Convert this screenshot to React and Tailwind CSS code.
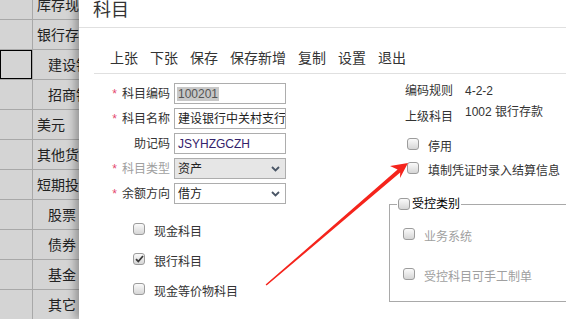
/* 科目 dialog over the account tree — 566 × 319 */

const font = "font-['Liberation_Sans','Noto_Sans_CJK_SC',sans-serif]";

/* ── Left tree (behind the dialog) ── */
const treeRows = [
  { t: "库存现金" },
  { t: "银行存款" },
  { t: "建设银行", sub: true, sel: true },
  { t: "招商银行", sub: true },
  { t: "美元" },
  { t: "其他货币资金" },
  { t: "短期投资" },
  { t: "股票", sub: true },
  { t: "债券", sub: true },
  { t: "基金", sub: true },
  { t: "其它", sub: true },
];

const Tree = () => (
  <div className="w-[79px] shrink-0 overflow-hidden bg-[#d4d4d4]">
    <div className="-mt-[10px]">
      {treeRows.map((r, i) => (
        <div key={i} className="flex h-[30px] border-b border-[#a8a8a8]">
          <div
            className={`w-[33px] shrink-0 border-r border-[#a8a8a8] ${
              r.sel ? "shadow-[inset_0_0_0_1px_#000]" : ""
            }`}
          />
          <div
            className={`flex items-center whitespace-nowrap text-[14px] leading-[20px] text-[#222] ${
              r.sub ? "pl-[15px]" : "pl-[4px]"
            }`}
          >
            {r.t}
          </div>
        </div>
      ))}
    </div>
  </div>
);

/* ── Checkbox (old-style gray) ── */
const Check = ({ checked }) => (
  <span className="w-[12px] h-[12px] shrink-0 rounded-[3px] border border-[#9c9c9c] bg-linear-to-b from-[#fafafa] to-[#d6d6d6] flex items-center justify-center">
    {checked && (
      <svg width="9" height="8" viewBox="0 0 9 8" aria-hidden="true">
        <path d="M1 4.2l2.3 2.3L8 1" fill="none" stroke="#3a3a3a" strokeWidth="1.8" />
      </svg>
    )}
  </span>
);

const CheckItem = ({ label, checked, gray, className = "" }) => (
  <div className={`flex items-start ${className}`}>
    <Check checked={checked} />
    <span className={`ml-[9px] mt-[1px] text-[12px] leading-[16px] whitespace-nowrap ${gray ? "text-[#a0a0a0]" : "text-[#333]"}`}>
      {label}
    </span>
  </div>
);

const Chevron = () => (
  <svg width="9" height="6" viewBox="0 0 9 6" aria-hidden="true">
    <path d="M1 1l3.5 3.5L8 1" fill="none" stroke="#4a5666" strokeWidth="1.8" />
  </svg>
);

/* ── Form row ── */
const FormRow = ({ label, req, disabled, children }) => (
  <div className="flex items-center h-[21px]">
    <div className="w-[80px] pr-[4px] text-right text-[12px] leading-[16px] whitespace-nowrap">
      {req && <span className="text-[#e4476e] mr-[5px]">*</span>}
      <span className={disabled ? "text-[#a0a0a0]" : "text-[#333]"}>{label}</span>
    </div>
    {children}
  </div>
);

const Field = ({ children, className = "" }) => (
  <div className={`w-[112px] h-[21px] border border-[#adadad] flex items-center overflow-hidden whitespace-nowrap text-[12px] leading-[16px] ${className}`}>
    {children}
  </div>
);

const Select = ({ value, disabled }) => (
  <Field className={`justify-between pl-[3px] pr-[5px] text-[#222] ${disabled ? "bg-[#e6e6e6]" : "bg-white"}`}>
    <span>{value}</span>
    <Chevron />
  </Field>
);

/* ── Red pointer arrow (annotation over the page) ── */
const Arrow = () => (
  <svg className="absolute inset-0 pointer-events-none" width="566" height="319" aria-hidden="true">
    <polygon
      points="408,163 390,166 397.6,169.6 265.6,284.6 266.6,285.6 400.2,172.6 400,178"
      fill="#f5241c"
    />
  </svg>
);

export default function App() {
  return (
    <div className={`relative w-[566px] h-[319px] overflow-hidden flex ${font}`}>
      <Tree />

      <div className="relative z-10 flex-1 bg-white overflow-hidden shadow-[-4px_0_8px_rgba(0,0,0,0.3)]">
        {/* Title */}
        <div className="h-[28px] border-b border-[#e0e0e0] pl-[14px] text-[18px] leading-[20px] text-[#333]">
          科目
        </div>

        {/* Toolbar */}
        <div className="ml-[15px] h-[46px] pt-[21px] pl-[16px] border-b border-[#e0e0e0] flex gap-[12px] text-[14px] leading-[18px] text-[#333]">
          {["上张", "下张", "保存", "保存新增", "复制", "设置", "退出"].map((t) => (
            <span key={t}>{t}</span>
          ))}
        </div>

        {/* Body */}
        <div className="ml-[15px] flex">
          {/* Left form */}
          <div className="w-[295px] shrink-0 pt-[9px]">
            <div className="flex flex-col gap-[4px]">
              <FormRow label="科目编码" req>
                <Field className="pl-[2px]">
                  <span className="inline-block px-[1px] bg-[#c8c8c8] text-[#555] leading-[14px]">100201</span>
                </Field>
              </FormRow>
              <FormRow label="科目名称" req>
                <Field className="pl-[3px] text-[#222]">建设银行中关村支行</Field>
              </FormRow>
              <FormRow label="助记码">
                <Field className="pl-[3px] text-[#33226b]">JSYHZGCZH</Field>
              </FormRow>
              <FormRow label="科目类型" req disabled>
                <Select value="资产" disabled />
              </FormRow>
              <FormRow label="余额方向" req>
                <Select value="借方" />
              </FormRow>
            </div>

            <div className="mt-[19px] pl-[39px]">
              <CheckItem label="现金科目" className="h-[30px]" />
              <CheckItem label="银行科目" checked className="h-[30px]" />
              <CheckItem label="现金等价物科目" className="h-[30px]" />
            </div>
          </div>

          {/* Right column */}
          <div className="w-[200px] shrink-0 pt-[9px]">
            <div className="pl-[16px] flex text-[12px] leading-[16px] text-[#333]">
              <span className="w-[60px]">编码规则</span>
              <span>4-2-2</span>
            </div>
            <div className="mt-[5px] pl-[16px] flex items-start text-[12px] leading-[16px] text-[#333]">
              <span className="w-[60px] pt-[5px]">上级科目</span>
              <span>1002 银行存款</span>
            </div>

            <div className="mt-[13px] pl-[18px]">
              <CheckItem label="停用" className="h-[24px]" />
              <CheckItem label="填制凭证时录入结算信息" className="h-[24px]" />
            </div>

            <fieldset className="mt-[10px] m-0 p-0 h-[106px] w-[200px] border border-[#a9a9a9]">
              <legend className="ml-[7px] px-[1px]">
                <span className="flex items-center gap-[2px] text-[12px] leading-[16px] text-black">
                  <Check />
                  受控类别
                </span>
              </legend>
              <div className="pl-[13px] pt-[16px]">
                <CheckItem label="业务系统" gray className="h-[40px]" />
                <CheckItem label="受控科目可手工制单" gray />
              </div>
            </fieldset>
          </div>
        </div>
      </div>

      <div className="absolute inset-0 z-20 pointer-events-none">
        <Arrow />
      </div>
    </div>
  );
}
